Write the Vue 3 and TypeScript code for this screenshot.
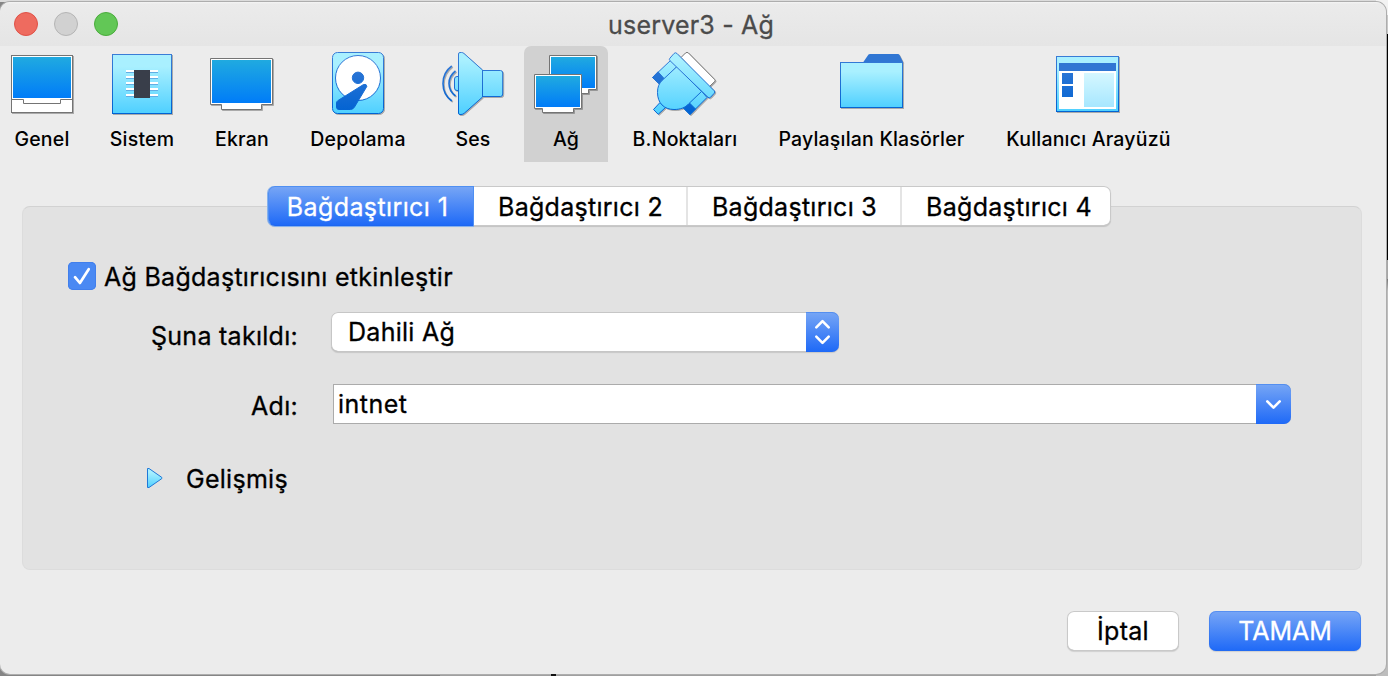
<script setup lang="ts">
import { ref } from 'vue'

interface Section {
  id: string
  label: string
  x: number
  width: number
}

const sections: Section[] = [
  { id: 'general', label: 'Genel', x: 0, width: 84 },
  { id: 'system', label: 'Sistem', x: 84, width: 116 },
  { id: 'display', label: 'Ekran', x: 200, width: 84 },
  { id: 'storage', label: 'Depolama', x: 284, width: 148 },
  { id: 'audio', label: 'Ses', x: 432, width: 82 },
  { id: 'network', label: 'Ağ', x: 524, width: 84 },
  { id: 'ports', label: 'B.Noktaları', x: 608, width: 154 },
  { id: 'shared', label: 'Paylaşılan Klasörler', x: 762, width: 219 },
  { id: 'interface', label: 'Kullanıcı Arayüzü', x: 981, width: 215 },
]

const current = ref('network')
const adapters = [1, 2, 3, 4]
const adapter = ref(1)
const enabled = ref(true)
</script>

<template>
  <div class="desktop">
    <div class="edge"><i class="e1"></i><i class="e2"></i><i class="e3"></i><i class="e4"></i><i class="e5"></i></div>
    <i class="speck"></i>
    <main class="window">
      <header class="titlebar">
        <span class="light red"></span>
        <span class="light grey"></span>
        <span class="light green"></span>
        <h1>userver3 - Ağ</h1>
      </header>

      <svg class="defs" width="0" height="0" aria-hidden="true">
        <defs>
          <linearGradient id="sky" x1="0" y1="0" x2="0" y2="1">
            <stop offset="0.2" stop-color="#a9f0ff" />
            <stop offset="1" stop-color="#4fd0ff" />
          </linearGradient>
          <linearGradient id="skywide" gradientUnits="userSpaceOnUse" x1="0" y1="60" x2="0" y2="114">
            <stop offset="0" stop-color="#a9f0ff" />
            <stop offset="1" stop-color="#4fd0ff" />
          </linearGradient>
          <linearGradient id="screen" x1="0" y1="0" x2="0" y2="1">
            <stop offset="0" stop-color="#20aae0" />
            <stop offset="1" stop-color="#007cf8" />
          </linearGradient>
          <linearGradient id="line" gradientUnits="userSpaceOnUse" x1="0" y1="54" x2="0" y2="114">
            <stop offset="0" stop-color="#3a7cd6" />
            <stop offset="1" stop-color="#0062d2" />
          </linearGradient>
          <linearGradient id="pale" x1="0" y1="0" x2="0" y2="1">
            <stop offset="0" stop-color="#d5f7ff" />
            <stop offset="1" stop-color="#a7e7ff" />
          </linearGradient>
        </defs>
      </svg>

      <nav class="toolbar">
        <button
          v-for="s in sections"
          :key="s.id"
          :class="['section', s.id, { selected: current === s.id }]"
          :style="{ width: s.width + 'px' }"
          @click="current = s.id"
        >
          <svg :width="s.width" height="74" :viewBox="`${s.x} 46 ${s.width} 74`">
            <g v-if="s.id === 'general'" fill="#fff" stroke="#747474">
              <rect x="11.5" y="55.5" width="61" height="57" />
              <path d="M11.5 99.5H23.5V103.5H60.5V99.5H72.5" />
              <rect x="13" y="57" width="58" height="41" fill="url(#screen)" stroke="none" />
            </g>
            <g v-else-if="s.id === 'system'">
              <rect x="112.5" y="54.5" width="59" height="59" fill="url(#sky)" stroke="url(#line)" />
              <g v-for="n in 5" :key="n">
                <path :d="`M126 ${65 + n * 6}h32`" stroke="#fff" stroke-width="2" />
                <path :d="`M126 ${66.5 + n * 6}h32`" stroke="#62aee4" />
              </g>
              <rect x="134" y="70" width="16" height="28" fill="#393e4a" />
            </g>
            <g v-else-if="s.id === 'display'">
              <path d="M210.5 58.5H272.5V104.5H261.5V109.5H221.5V104.5H210.5Z" fill="#fff" stroke="#747474" />
              <rect x="212" y="60" width="59" height="43" fill="url(#screen)" />
            </g>
            <g v-else-if="s.id === 'storage'" stroke="url(#line)">
              <rect x="332.5" y="52.5" width="51" height="61" rx="5" fill="url(#sky)" />
              <circle cx="358" cy="78" r="22.5" fill="#fff" />
              <circle cx="358" cy="77.8" r="5.7" fill="url(#line)" />
              <path d="M338 100.5 363.5 84.5Q366.8 83.7 366.8 86.5L354.5 107Q353 109.5 350.5 109.5H339Q336.5 109.5 336.5 107V103Q336.5 101.5 338 100.5Z" fill="url(#line)" />
            </g>
            <g v-else-if="s.id === 'audio'" fill="url(#skywide)" stroke="url(#line)">
              <path d="M458.5 76.5H457Q454.5 76.5 454.5 79V88Q454.5 90.5 457 90.5H458.5" />
              <path d="M482.5 70.5H500.5Q502.7 70.5 502.7 73V94Q502.7 96.5 500.5 96.5H482.5Z" />
              <path d="M458.5 54Q458.5 52.5 460 52.5H461.5Q463 52.5 464 53.5L482.5 70V97L464.5 113Q463 114.5 461 114.5H460Q458.5 114.5 458.5 113Z" />
              <g fill="none" stroke-width="1.6">
                <path d="M451.8 66Q443 72.5 443 83.5T451.8 101" />
                <path d="M455.5 71Q449 76 449 83.5T455.5 96" />
              </g>
            </g>
            <g v-else-if="s.id === 'network'">
              <path d="M549.5 55.5H596.5V89.5H588.5V93.5H557.5V89.5H549.5Z" fill="#fff" stroke="#747474" />
              <rect x="551" y="57" width="44" height="31" fill="url(#screen)" />
              <path d="M534.5 74.5H581.5V108.5H573.5V112.5H542.5V108.5H534.5Z" fill="#fff" stroke="#747474" />
              <rect x="536" y="76" width="44" height="31" fill="url(#screen)" />
            </g>
            <g v-else-if="s.id === 'ports'" fill="url(#skywide)" stroke="url(#line)" stroke-linejoin="round">
              <path d="M681 57.5 685.5 53Q687 51.7 688.5 53L714.5 79.3Q715.7 80.5 714.5 81.7L709 87Z" fill="#fff" stroke="#747474" />
              <path d="M670.5 60.5 652.5 77.5 659.5 84 677 66.5Z" />
              <path d="M658 71.8 652.5 77.5 659.5 84 664.5 79Z" fill="url(#line)" />
              <path d="M707 97.5 690 114.5 683.5 108 701 90.5Z" />
              <path d="M695.5 109 690 114.5 683.5 108 689 102.5Z" fill="url(#line)" />
              <path d="M660 102.5 653.5 109.5 658.2 114.3 665.5 107.5Z" />
              <path d="M677 66.5 701.5 91.5 689 103.5C685 108 680 109.5 674 109.5 664 109.5 657.5 103 657.5 92.5 657.5 87 659 83.5 662 80.5Z" />
              <path d="M669.8 58.3 674 53.5Q675.3 52 677 53.5L714.2 90.7Q715.5 92 714.2 93.3L710.5 97.3Q709.2 98.5 708 97.3L670 60.7Q668.8 59.5 669.8 58.3Z" />
            </g>
            <g v-else-if="s.id === 'shared'">
              <path d="M863 62.5 868.5 54.5Q869 54 870 54H898Q899 54 899.4 54.8L903.3 62.5Z" fill="#3076d3" />
              <rect x="840.5" y="62.5" width="62" height="45" fill="url(#sky)" stroke="url(#line)" />
            </g>
            <g v-else>
              <rect x="1056.5" y="56.5" width="62" height="55" fill="url(#sky)" stroke="url(#line)" />
              <path d="M1059 63h57v8h-57z" fill="#3076d3" />
              <path d="M1059 71h57v38h-57z" fill="#fff" />
              <path d="M1062 73h11v11h-11zM1062 86h11v11h-11z" fill="url(#line)" />
              <path d="M1084 73h30v34h-30z" fill="url(#pale)" />
            </g>
          </svg>
          <span class="caption">{{ s.label }}</span>
        </button>
      </nav>

      <div class="tabs">
        <button v-for="n in adapters" :key="n" :class="['tab', { active: adapter === n }]" @click="adapter = n">
          Bağdaştırıcı {{ n }}
        </button>
      </div>

      <section class="panel">
        <div class="enable" @click="enabled = !enabled">
          <span class="check">
            <svg v-if="enabled" width="28" height="28" viewBox="0 0 28 28">
              <path d="M7 15.2 11.9 21 20.7 7.2" fill="none" stroke="#fff" stroke-width="2.7" stroke-linecap="round" stroke-linejoin="round" />
            </svg>
          </span>
          <span class="enable-text">Ağ Bağdaştırıcısını etkinleştir</span>
        </div>

        <div class="row attached">
          <label>Şuna takıldı:</label>
          <div class="select">
            <span>Dahili Ağ</span>
            <i class="knob">
              <svg width="33" height="40" viewBox="0 0 33 40">
                <path d="M10.3 15.4 16.5 9.2 22.7 15.4M10.3 24.6 16.5 30.8 22.7 24.6" fill="none" stroke="#fff" stroke-width="2.6" stroke-linecap="round" stroke-linejoin="round" />
              </svg>
            </i>
          </div>
        </div>

        <div class="row name">
          <label>Adı:</label>
          <div class="combo">
            <span>intnet</span>
            <i class="knob">
              <svg width="35" height="40" viewBox="0 0 35 40">
                <path d="M11.3 17.4 17.5 23.6 23.7 17.4" fill="none" stroke="#fff" stroke-width="2.6" stroke-linecap="round" stroke-linejoin="round" />
              </svg>
            </i>
          </div>
        </div>

        <div class="advanced">
          <svg width="18" height="22" viewBox="146 467 18 22">
            <path d="M147.5 468.5H149L161.8 477.4V478.6L149 487.5H147.5Z" fill="url(#sky)" stroke="#1f78d8" stroke-linejoin="round" />
          </svg>
          <span>Gelişmiş</span>
        </div>
      </section>

      <footer class="actions">
        <button class="btn cancel">İptal</button>
        <button class="btn ok">TAMAM</button>
      </footer>
    </main>
  </div>
</template>

<style>
html,
body {
  margin: 0;
  overflow: hidden;
}
</style>

<style scoped>
* {
  box-sizing: border-box;
}
.desktop {
  position: relative;
  width: 1388px;
  height: 676px;
  padding-top: 2px;
  overflow: hidden;
  background: linear-gradient(#dcdcdc 0 2px, transparent 2px), linear-gradient(90deg, #858585 0 440px, #a0a0a0 440px);
  font-family: Inter, "Liberation Sans", sans-serif;
  font-weight: 400;
  letter-spacing: 0.28px;
  -webkit-text-stroke: 0.3px;
  color: #000;
}
button {
  appearance: none;
  border: 0;
  padding: 0;
  margin: 0;
  background: none;
  color: inherit;
  font: inherit;
  letter-spacing: inherit;
  white-space: nowrap;
}
.edge {
  position: absolute;
  top: 0;
  right: 0;
  width: 12px;
  height: 676px;
  display: flex;
  flex-direction: column;
}
.e1 { height: 15px; background: #f2f2f2; }
.e2 { height: 19px; background: #c8c8c8; }
.e3 { height: 226px; background: #000; }
.e4 { height: 19px; background: #a6a6a6; }
.e5 { flex: 1; background: linear-gradient(#777, #bdbdbd 12px); }
.speck {
  position: absolute;
  left: 551px;
  top: 674px;
  width: 5px;
  height: 2px;
  background: #111;
  z-index: 2;
}
.window {
  position: relative;
  width: 1386px;
  height: 672px;
  overflow: hidden;
  border-radius: 10px;
  background: #ececec;
  box-shadow: 0 0 0 1px #adadad;
}
.titlebar {
  height: 44px;
  display: flex;
  align-items: center;
  padding-left: 14px;
  gap: 16px;
  background: linear-gradient(#f5f5f5 0, #ebebeb 2px, #e5e5e5 100%);
}
.light {
  width: 24px;
  height: 24px;
  border-radius: 50%;
  border: 1px solid;
}
.red { background: #ee6b5f; border-color: #df5147; }
.grey { background: #d1d1d1; border-color: #b4b4b4; }
.green { background: #62c756; border-color: #4aab3c; }
h1 {
  flex: 1;
  margin: 1px 0 0 474px;
  font-size: 25px;
  font-weight: 400;
  line-height: 44px;
  color: #4b4b4b;
  letter-spacing: 0.2px;
  white-space: nowrap;
}
.defs {
  position: absolute;
}
.toolbar {
  display: flex;
  height: 116px;
}
.section {
  display: flex;
  flex-direction: column;
  align-items: center;
  height: 116px;
  border-radius: 7px 7px 0 0;
}
.section svg {
  display: block;
  filter: drop-shadow(1px 1px 0 rgba(0, 0, 0, 0.28));
}
.section.audio {
  margin-right: 10px;
}
.section.selected {
  background: #d1d1d1;
}
.caption {
  font-size: 19.5px;
  font-weight: 500;
  line-height: 38px;
  letter-spacing: 0.2px;
  -webkit-text-stroke: 0;
}
.tabs {
  position: relative;
  z-index: 1;
  display: flex;
  width: 843px;
  height: 40px;
  margin: 24px 0 -20px 268px;
  border-radius: 7px;
  background: #fff;
  box-shadow: inset 0 0 0 1px #c9c9c9, inset 0 -1px 0 #a8a8a8, 0 1px 1px rgba(0, 0, 0, 0.14);
}
.tab {
  width: 214px;
  height: 38px;
  margin-top: 1px;
  padding-left: 1px;
  font-size: 25px;
  line-height: 41px;
  border-right: 2px solid #e4e4e4;
}
.tab:last-child {
  width: 209px;
  padding-left: 5px;
  border-right: 0;
}
.tab.active {
  width: 206px;
  height: 40px;
  margin-top: 0;
  padding: 0 7px 0 0;
  border: 1px solid #4f8ff2;
  border-bottom-color: #1d66f0;
  border-radius: 7px 0 0 7px;
  background: linear-gradient(#76a5f5, #1f6af7);
  box-shadow: -1px 0 0 #86b1ee, 0 1px 0 #86b1ee;
  letter-spacing: 0.4px;
  color: #fff;
}
.panel {
  width: 1340px;
  height: 364px;
  margin-left: 22px;
  padding: 56px 0 0;
  border: 1px solid #dcdcdc;
  border-top-color: #d2d2d2;
  border-radius: 8px;
  background: #e2e2e2;
  font-size: 25px;
}
.enable {
  display: flex;
  align-items: center;
  height: 28px;
  margin: -1px 0 0 45px;
}
.enable-text {
  padding-top: 2px;
}
.check {
  width: 28px;
  height: 28px;
  margin-right: 8px;
  border-radius: 5px;
  background: #4a89f3;
  box-shadow: inset 0 0 0 1px #417fec;
}
.row {
  display: flex;
  align-items: center;
  height: 40px;
}
.row label {
  width: 275px;
  text-align: right;
  white-space: nowrap;
  padding-top: 7px;
}
.attached {
  margin-top: 22px;
}
.name {
  margin-top: 32px;
}
.name label {
  padding-top: 3px;
}
.select {
  display: flex;
  width: 508px;
  height: 40px;
  margin-left: 33px;
  padding-left: 17px;
  line-height: 40px;
  border-radius: 7px;
  background: #fff;
  box-shadow: inset 0 0 0 1px #c6c6c6, inset 0 -1px 0 #a4a4a4, 0 1px 1px rgba(0, 0, 0, 0.12);
}
.select span,
.combo span {
  flex: 1;
}
.knob {
  border-radius: 0 7px 7px 0;
  background: linear-gradient(#77a6f5, #1e69f7);
  box-shadow: inset 0 1px 0 rgba(50, 120, 235, 0.5);
}
.knob svg {
  display: block;
}
.combo {
  display: flex;
  width: 958px;
  height: 40px;
  margin-left: 35px;
  padding-left: 5px;
  line-height: 40px;
  letter-spacing: 0.5px;
  border-radius: 0 7px 7px 0;
  background: #fff;
  box-shadow: inset 0 0 0 1px #ababab;
}
.advanced {
  display: flex;
  align-items: center;
  height: 40px;
  margin: 34px 0 0 123px;
}
.advanced span {
  margin-left: 22px;
  padding-top: 2px;
}
.actions {
  display: flex;
  justify-content: flex-end;
  gap: 30px;
  margin: 41px 25px 0 0;
}
.btn {
  height: 40px;
  border-radius: 7px;
  font-size: 25px;
  line-height: 40px;
}
.cancel {
  width: 112px;
  background: #fff;
  box-shadow: inset 0 0 0 1px #c9c9c9, inset 0 -1px 0 #adadad, 0 1px 1px rgba(0, 0, 0, 0.12);
}
.ok {
  width: 152px;
  letter-spacing: 0;
  color: #fff;
  background: linear-gradient(#78a6f6, #1e69f7);
  box-shadow: inset 0 0 0 1px rgba(40, 110, 235, 0.4), 0 1px 1px rgba(0, 0, 0, 0.12);
}
</style>
